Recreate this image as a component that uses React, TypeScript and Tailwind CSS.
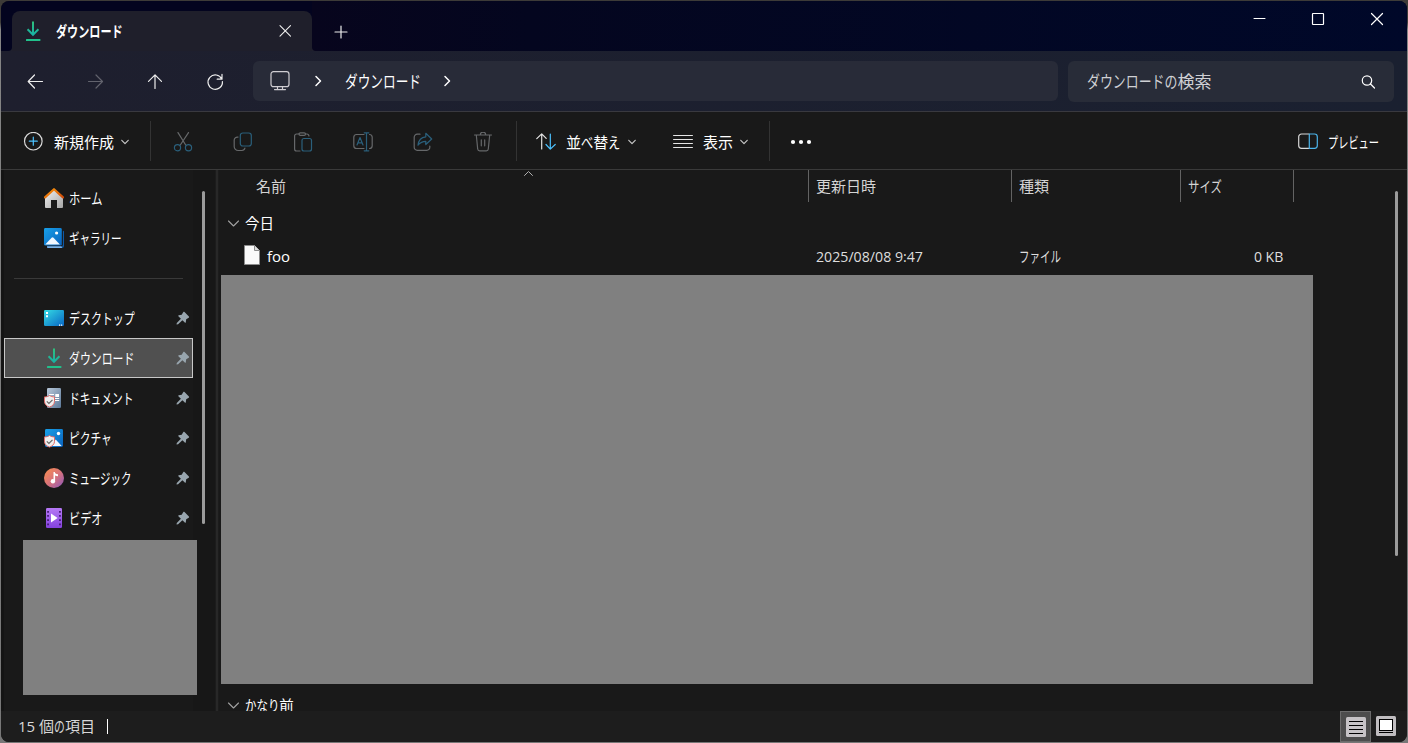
import React, { Fragment, ReactNode } from "react";

const ICON_GRAY = "#66686a";
const ICON_BLUE = "#2a5f7b";

// Kana is set narrower than kanji, so each kana run is squeezed on its own
const Ja = ({ text, k = 0.74 }: { text: string; k?: number }) => {
    const parts = text.split(/([\u3040-\u30ff]+)/).filter(Boolean);
    return <span className="whitespace-pre">
        {
            parts.map((part, ind) => {
                if (!/[\u3040-\u30ff]/.test(part)) return <Fragment key={ind}>{part}</Fragment>;
                return <span key={ind} className="inline-block" style={{ width: `${part.length * k}em` }}>
                    <span className="inline-block origin-left" style={{ transform: `scaleX(${k})` }}>{part}</span>
                </span>
            })
        }
    </span>
};

const Svg = ({ size = 20, color = "#fff", sw = 1.2, className = "", children }: {
    size?: number;
    color?: string;
    sw?: number;
    className?: string;
    children: ReactNode;
}) => {
    return <svg width={size} height={size} viewBox={`0 0 ${size} ${size}`} fill="none" stroke={color} strokeWidth={sw} strokeLinecap="round" strokeLinejoin="round" className={`shrink-0 ${className}`}>{children}</svg>
};

const Chevron = () => {
    return <Svg size={8} color="#c4c4c4"><path d="M.8 2.3 4 5.6 7.2 2.3" /></Svg>
};

const DownloadIcon = () => {
    return <svg width="20" height="20" viewBox="0 0 20 20" fill="none" className="shrink-0">
        <defs>
            <linearGradient id="dl" x1="0" y1="0" x2="0" y2="1">
                <stop offset="0" stopColor="#2fc07c" />
                <stop offset="1" stopColor="#16b0a8" />
            </linearGradient>
        </defs>
        <path d="M9 .6h2v10.7l3.8-3.7 1.3 1.4L10 15.2 3.9 9l1.3-1.4L9 11.3Z" fill="url(#dl)" />
        <rect x="3" y="18" width="14.4" height="2" rx=".6" fill="#21c08b" />
    </svg>
};

const HomeIcon = () => {
    return <svg width="20" height="20" viewBox="0 0 20 20" className="shrink-0">
        <defs>
            <linearGradient id="hm" x1="0" y1="0" x2="1" y2="1">
                <stop offset="0" stopColor="#f1f1f1" />
                <stop offset="1" stopColor="#a6a6a6" />
            </linearGradient>
            <linearGradient id="rf" x1="0" y1="0" x2="1" y2="1">
                <stop offset="0" stopColor="#ff9a0c" />
                <stop offset="1" stopColor="#cf4a0a" />
            </linearGradient>
        </defs>
        <path d="M1 9.5 10 1.5l9 8V19a1 1 0 0 1-1 1h-5v-8H7v8H2a1 1 0 0 1-1-1Z" fill="url(#hm)" />
        <path d="M1 9.4 10 1.2 19 9.4" fill="none" stroke="url(#rf)" strokeWidth="2.2" strokeLinecap="round" strokeLinejoin="round" />
    </svg>
};

const GalleryIcon = () => {
    return <svg width="20" height="20" viewBox="0 0 20 20" className="shrink-0">
        <defs>
            <linearGradient id="gl" x1="0" y1="0" x2="1" y2="1">
                <stop offset="0" stopColor="#18a0e8" />
                <stop offset="1" stopColor="#0a62bd" />
            </linearGradient>
        </defs>
        <path d="M18.9 2.8h.3c.5 0 .8.4.8.9V18a2 2 0 0 1-2 2H4a1 1 0 0 1-1-1v-.2h13.9a2 2 0 0 0 2-2Z" fill="#0d5aa8" />
        <path d="M3 18.3h14.5l.6 1.7H4a1 1 0 0 1-1-1Z" fill="#79b2ea" />
        <rect x="0" y="0" width="17.8" height="17.6" rx="1.4" fill="url(#gl)" />
        <path d="M1.2 16.6 7.6 9.7a1.3 1.3 0 0 1 1.9 0l6.4 6.9Z" fill="#f0f7ff" />
        <circle cx="12.6" cy="5" r="1.6" fill="#fff" />
    </svg>
};

const DesktopIcon = () => {
    return <svg width="20" height="20" viewBox="0 0 20 20" className="shrink-0">
        <defs>
            <linearGradient id="dk" x1="0" y1="0" x2="1" y2="1">
                <stop offset="0" stopColor="#35dbe4" />
                <stop offset="1" stopColor="#0866c4" />
            </linearGradient>
        </defs>
        <rect x="0" y="2" width="20" height="16" rx="1.2" fill="url(#dk)" />
        <path d="M2 4h2v2H2zM2 7.3h2v2H2zM15 16.6h1.2v1.2H15zM17 16.6h1.2v1.2H17z" fill="#fff" />
    </svg>
};

const Shield = () => {
    return <g>
        <path d="M5.5 7.4c1.4 1.1 3 1.5 5 1.5v4.5c0 2.7-1.9 4.6-5 5.7C2.4 18 .5 16.1.5 13.4V8.9c2 0 3.6-.4 5-1.5Z" fill="#efefef" stroke="#e06a67" />
        <path d="M2.8 13.4 4.9 15.4 8.5 11.8" fill="none" stroke="#666" strokeWidth="1.2" />
    </g>
};

const DocumentIcon = () => {
    return <svg width="20" height="20" viewBox="0 0 20 20" className="shrink-0">
        <defs>
            <linearGradient id="dc" x1="0" y1="0" x2="1" y2="1">
                <stop offset="0" stopColor="#b9c9da" />
                <stop offset="1" stopColor="#5b7898" />
            </linearGradient>
        </defs>
        <rect x="3" y="0" width="14" height="20" rx="1.2" fill="url(#dc)" />
        <path d="M5 6.5h5M5 8.8h5M11 10.5h4.2M11 12.5h4.2" stroke="#fff" strokeWidth="1" />
        <rect x="11.3" y="6" width="3.7" height="3" fill="#fff" />
        <Shield />
    </svg>
};

const PictureIcon = () => {
    return <svg width="20" height="20" viewBox="0 0 20 20" className="shrink-0">
        <rect x="1" y="1" width="18" height="18" rx="1.4" fill="url(#gl)" />
        <path d="m6.5 18 5.2-6.4 6 6.4Z" fill="#f0f7ff" />
        <circle cx="14.5" cy="5.5" r="1.7" fill="#fff" />
        <Shield />
    </svg>
};

const MusicIcon = () => {
    return <svg width="20" height="20" viewBox="0 0 20 20" className="shrink-0">
        <defs>
            <linearGradient id="ms" x1=".1" y1=".1" x2=".9" y2=".9">
                <stop offset="0" stopColor="#f58a55" />
                <stop offset=".5" stopColor="#d97379" />
                <stop offset="1" stopColor="#9a5cb0" />
            </linearGradient>
        </defs>
        <circle cx="10" cy="10" r="10" fill="url(#ms)" />
        <circle cx="8.9" cy="13.2" r="2.2" fill="#fff" />
        <path d="M9.5 4h1.3c.2 1.5 1 2 3.2 2.3v2c-1.2 0-2-.2-2.9-.7v5.7H9.5Z" fill="#fff" />
    </svg>
};

const VideoIcon = () => {
    return <svg width="20" height="20" viewBox="0 0 20 20" className="shrink-0">
        <defs>
            <linearGradient id="vd" x1="0" y1="0" x2="0" y2="1">
                <stop offset="0" stopColor="#b678f5" />
                <stop offset="1" stopColor="#8442de" />
            </linearGradient>
        </defs>
        <rect x="2" y="0" width="16" height="20" rx="1.2" fill="url(#vd)" />
        <path d="M3.2 3h1.7v1.7H3.2zM3.2 7h1.7v1.7H3.2zM3.2 11.3h1.7V13H3.2zM3.2 15.5h1.7v1.7H3.2zM15.1 3h1.7v1.7h-1.7zM15.1 7h1.7v1.7h-1.7zM15.1 11.3h1.7V13h-1.7zM15.1 15.5h1.7v1.7h-1.7z" fill="#41186f" />
        <path d="M7 5.6v8.8l6.6-4.4Z" fill="#fff" />
    </svg>
};

const Pin = () => {
    return <svg width="14" height="14" viewBox="0 0 14 14" className="shrink-0">
        <path d="M7.2 1.2c.4-.4.9-.5 1.3-.1l4.4 4.4c.4.4.2.9-.2 1.2l-2.5 1.6-.4 2.9c-.1.6-.6.8-1 .4L6.4 9.2l-4.3 4-1.6.4.3-1.6 4.1-4.3L2.4 5.3c-.4-.4-.2-.9.4-1l2.9-.5Z" fill="#98a5ae" />
    </svg>
};

const places = [
    { icon: <DesktopIcon />, name: "デスクトップ", k: 0.73 },
    { icon: <DownloadIcon />, name: "ダウンロード", k: 0.725, active: true },
    { icon: <DocumentIcon />, name: "ドキュメント", k: 0.715 },
    { icon: <PictureIcon />, name: "ピクチャ", k: 0.715 },
    { icon: <MusicIcon />, name: "ミュージック", k: 0.695 },
    { icon: <VideoIcon />, name: "ビデオ", k: 0.745 },
];

const TitleBar = () => {
    return <div className="flex h-[50px] bg-[#03041f]">
        <div className="flex items-end w-[11px]">
            <div className="w-full h-1 bg-[#1f202d]">
                <div className="h-full rounded-br-sm bg-[#03041f]"></div>
            </div>
        </div>
        <div className="flex w-[300px] h-10 mt-[10px] pl-[11px] items-center rounded-t-lg bg-[#1f1f2b]">
            <DownloadIcon />
            <div className="ml-[13px] w-[220px] text-[15px] font-bold text-white"><Ja text="ダウンロード" k={0.74} /></div>
            <Svg size={16} color="#eee" sw={1.1} className="ml-[1px]"><path d="M3 2.7 13.5 13.2M13.5 2.7 3 13.2" /></Svg>
        </div>
        <div className="flex flex-1 items-end bg-linear-to-r from-[#07051d] via-[#04061f] via-20% to-[#000829]">
            <div className="w-1 h-1 bg-[#1f202d]">
                <div className="h-full rounded-bl-sm bg-[#07051d]"></div>
            </div>
            <Svg size={16} color="#eee" className="ml-[17px] mb-[11px]"><path d="M8 2v12M2 8h12" /></Svg>
            <div className="flex flex-1 h-full pt-[10px] pr-[22px] gap-[43px] items-start justify-end">
                <Svg size={16} sw={1}><path d="M3 7.5h11" /></Svg>
                <Svg size={16}><rect x="2.5" y="2.5" width="11" height="11" rx=".5" /></Svg>
                <Svg size={16}><path d="M2.5 2.5 13.5 13.5M13.5 2.5 2.5 13.5" /></Svg>
            </div>
        </div>
    </div>
};

const NavBar = () => {
    return <div className="flex h-[61px] pt-[10px] border-b border-[#39393f] bg-linear-to-r from-[#1e1f2e] to-[#1a2030]">
        <div className="flex h-10 w-[252px] pl-[24px] gap-10 items-center">
            <Svg color="#eee"><path d="M17.5 10.5h-14M9.5 4 3.2 10.5 9.5 17" /></Svg>
            <Svg color="#62636d"><path d="M3.5 10.5h14M11 4l6.5 6.5L11 17" /></Svg>
            <Svg color="#eee"><path d="M10 17.5V3.8M3.5 10.4 10 3.8l6.5 6.6" /></Svg>
            <Svg color="#eee"><path d="M16.8 8.2a7.2 7.2 0 1 0 .6 2.3M17 3.3v4.9h-4.8" /></Svg>
        </div>
        <div className="flex w-[805px] h-10 pl-[17px] items-center rounded-md bg-[#282b38]">
            <Svg color="#cfcdd2"><rect x="1" y=".7" width="18" height="15" rx="2.5" /><path d="M7.5 16v2.5M12.5 16v2.5M4.5 18.6h11" /></Svg>
            <Svg size={12} sw={1.5} className="ml-[22px]"><path d="M4 1.5 8.5 6 4 10.5" /></Svg>
            <div className="ml-[21px] w-[96px] text-[17px] text-white"><Ja text="ダウンロード" k={0.745} /></div>
            <Svg size={12} sw={1.5}><path d="M4 1.5 8.5 6 4 10.5" /></Svg>
        </div>
        <div className="flex w-[326px] h-[41px] ml-[10px] pl-[19px] pr-[18px] items-center justify-between rounded-md bg-[#282c38]">
            <div className="mb-[2px] text-[17px] text-[#cfd0d4]"><Ja text="ダウンロードの検索" k={0.76} /></div>
            <Svg size={16}><circle cx="7" cy="6.5" r="4.7" /><path d="m10.5 10 4 4" /></Svg>
        </div>
    </div>
};

const CommandBar = () => {
    return <div className="flex h-[58px] items-center border-b border-[#3a3a3a] bg-[#191919] text-[15px] text-white">
        <div className="flex w-[149px] pl-[22px] pt-[3px] items-center">
            <Svg color="#d8d8d8"><circle cx="10.3" cy="9.2" r="8.8" /><path d="M10.3 5.2v8M6.3 9.2h8" stroke="#4cc2ff" /></Svg>
            <div className="ml-[11px] w-[67px]">新規作成</div>
            <Chevron />
        </div>
        <div className="w-px h-10 bg-[#333]"></div>
        <div className="flex w-[365px] pl-[22px] pt-[3px] gap-10 items-center">
            <Svg color={ICON_GRAY}>
                <path d="m5 .6 7.7 12.4M15.5.6 7.3 13" />
                <circle cx="4.5" cy="15.7" r="3.1" stroke={ICON_BLUE} />
                <circle cx="15.5" cy="15.7" r="3.1" stroke={ICON_BLUE} />
            </Svg>
            <Svg color={ICON_GRAY}>
                <path d="M5 5.2A3 3 0 0 0 1.2 8v6.5a4 4 0 0 0 4 4H9a3 3 0 0 0 2.9-2.3" />
                <rect x="7.3" y="1" width="11" height="13" rx="2.5" stroke={ICON_BLUE} />
            </Svg>
            <Svg color={ICON_GRAY}>
                <path d="M6 2H3.5a1.9 1.9 0 0 0-1.9 1.9V17a2 2 0 0 0 2 2H7M12.5 2H14a1.9 1.9 0 0 1 1.9 1.9" />
                <rect x="6" y=".8" width="6.5" height="2.6" rx="1.3" />
                <rect x="9" y="6.5" width="9.5" height="12.5" rx="2" stroke={ICON_BLUE} />
            </Svg>
            <Svg color={ICON_GRAY}>
                <path d="M11 2.5H3.5A2.8 2.8 0 0 0 .8 5.3v8.4a2.8 2.8 0 0 0 2.7 2.8H11M16.5 2.5a2.8 2.8 0 0 1 2.7 2.8v8.4a2.8 2.8 0 0 1-2.7 2.8" />
                <path d="M13.5.8v18M11.2.8h4.6M11.2 18.8h4.6M4 13l3-7.5L10 13M5 10.8h4" stroke={ICON_BLUE} />
            </Svg>
            <Svg color={ICON_GRAY}>
                <path d="M7 2.2H4.2a3 3 0 0 0-3 3v10.1a3 3 0 0 0 3 3h9.6a3 3 0 0 0 3-3V14" />
                <path d="M12.8 1.3 18.7 7l-5.9 5.5V9.3c-3.2 0-5.5 1-7.8 3.9.5-4.6 3-8 7.8-8.4Z" stroke={ICON_BLUE} />
            </Svg>
            <Svg color={ICON_GRAY}>
                <path d="M1.5 3h17M7.3 2.9a2.7 2.7 0 0 1 5.4 0M3.3 3l1.4 14a2 2 0 0 0 2 1.8h6.6a2 2 0 0 0 2-1.8l1.4-14M8.3 7.8v6M11.7 7.8v6" />
            </Svg>
        </div>
        <div className="w-px h-10 bg-[#333]"></div>
        <div className="flex w-[252px] pl-[19px] pt-[3px] items-center">
            <Svg color="#e4e4e4">
                <path d="M5.7 17V2M.8 6.7l4.9-4.9 4.5 4.5" />
                <path d="M14.3 2v15M10 12.5l4.3 4.6 4.9-4.6" stroke="#4cc2ff" />
            </Svg>
            <div className="ml-[10px] w-[62px]"><Ja text="並べ替え" k={0.82} /></div>
            <Chevron />
            <Svg color="#e4e4e4" className="ml-[37px]"><path d="M.6 3.5h18.8M.6 7.5h18.8M.6 11.5h18.8M.6 15.5h18.8" /></Svg>
            <div className="ml-[10px] w-[37px]">表示</div>
            <Chevron />
        </div>
        <div className="w-px h-10 bg-[#333]"></div>
        <div className="flex flex-1 ml-[20px] pt-[2px]">
            <svg width="22" height="6" viewBox="0 0 22 6" fill="#fff">
                <circle cx="3" cy="3" r="2.1" />
                <circle cx="11" cy="3" r="2.1" />
                <circle cx="19" cy="3" r="2.1" />
            </svg>
        </div>
        <div className="flex pt-[3px] items-center">
            <Svg color="#d8d8d8">
                <path d="M11 2H3.5A2.8 2.8 0 0 0 .7 4.8v8.8a2.8 2.8 0 0 0 2.8 2.8H11" />
                <path d="M11.3 2h5.2a2.8 2.8 0 0 1 2.8 2.8v8.8a2.8 2.8 0 0 1-2.8 2.8h-5.2Z" stroke="#4cb4ea" />
            </Svg>
            <div className="w-[79px] ml-[10px]"><Ja text="プレビュー" k={0.68} /></div>
        </div>
    </div>
};

const Sidebar = () => {
    return <div className="flex w-[214px] border-l-[3px] border-[#141414] bg-[#171717]">
        <div className="w-[189px] pt-2 bg-[#191919] text-[15px] text-white">
            <div className="flex h-10 pl-10 gap-[5px] items-center"><HomeIcon /><Ja text="ホーム" k={0.75} /></div>
            <div className="flex h-10 pl-10 gap-[5px] items-center"><GalleryIcon /><Ja text="ギャラリー" k={0.7} /></div>
            <div className="h-10 pt-5 pl-[10px] pr-[10px]"><div className="h-px bg-[#393939]"></div></div>
            {
                places.map((p, ind) => {
                    return <div key={ind} className={`flex h-10 gap-[5px] items-center border pl-[39px] pr-[2px] ${p.active ? "border-[#c8c8c8] bg-[#505050]" : "border-transparent"}`}>
                        {p.icon}
                        <div className="flex-1"><Ja text={p.name} k={p.k} /></div>
                        <Pin />
                    </div>
                })
            }
            <div className="w-[174px] h-[155px] mt-[2px] ml-[19px] bg-[#808080]"></div>
        </div>
        <div className="w-[3px] h-[333px] mt-[21px] ml-[9px] rounded-full bg-[#9b9b9b]"></div>
    </div>
};

const GroupRow = ({ text, k }: { text: string; k?: number }) => {
    return <div className="flex h-[30px] pl-[8px] items-center">
        <Svg size={12} color="#a0a0a0" sw={1.1}><path d="M1.5 4 6.5 9l5-5" /></Svg>
        <div className="ml-[6px] text-[14.5px] text-white"><Ja text={text} k={k} /></div>
    </div>
};

const FileList = () => {
    return <div className="flex flex-1 h-full overflow-hidden bg-[#191919] text-[15px] text-[#dedede]">
        <div className="w-[1176px] shrink-0">
            <div className="flex relative h-8 items-center text-[#d4d4d4]">
                <Svg size={10} color="#b0b0b0" sw={1} className="absolute left-[305px] -top-[2px]"><path d="M.5 7.5l4-4 4 4" /></Svg>
                <div className="w-[590px] h-8 pl-[37px] border-r border-[#636363] leading-8">名前</div>
                <div className="w-[203px] h-8 pl-[7px] border-r border-[#636363] leading-8">更新日時</div>
                <div className="w-[169px] h-8 pl-[7px] border-r border-[#636363] leading-8">種類</div>
                <div className="w-[113px] h-8 pl-[7px] border-r border-[#636363] leading-8"><Ja text="サイズ" k={0.76} /></div>
            </div>
            <div className="h-[6px]"></div>
            <GroupRow text="今日" />
            <div className="flex h-9 items-center">
                <div className="flex w-[597px] pl-[25px] items-center text-white">
                    <svg width="16" height="20" viewBox="0 0 16 20" className="mb-[2px]">
                        <path d="M.5.5h10l5 5v14H.5Z" fill="#fafafa" stroke="#8c8c8c" />
                        <path d="M10.5.5v5h5" fill="#ddd" stroke="#8c8c8c" />
                    </svg>
                    <div className="ml-[7px] font-['Open_Sans']">foo</div>
                </div>
                <div className="w-[203px]"><span className="inline-block origin-left scale-x-[.945] font-['Open_Sans'] whitespace-nowrap">2025/08/08 9:47</span></div>
                <div className="w-[169px]"><Ja text="ファイル" k={0.7} /></div>
                <div className="w-[95px] text-right"><span className="inline-block origin-right scale-x-[.94] font-['Open_Sans']">0 KB</span></div>
            </div>
            <div className="w-[1092px] h-[409px] mt-[1px] ml-[2px] bg-[#808080]"></div>
            <div className="h-[6px]"></div>
            <GroupRow text="かなり前" k={0.79} />
        </div>
        <div className="w-[3px] h-[365px] mt-[21px] rounded-full bg-[#9b9b9b]"></div>
    </div>
};

const StatusBar = () => {
    return <div className="flex h-[31px] pl-[17px] pr-[7px] items-center bg-[#1d1d1d] text-[15px] text-[#d8d8d8]">
        <div className="w-[89px] whitespace-pre"><span className="font-['Open_Sans']">15 </span><Ja text="個の項目" k={0.72} /></div>
        <div className="w-px h-[15px] bg-white"></div>
        <div className="flex-1"></div>
        <div className="flex w-[31px] h-[31px] items-center justify-center border border-[#6b6b6b] bg-[#4d4d4d]">
            <svg width="20" height="20" viewBox="0 0 20 20">
                <rect width="20" height="20" rx="1.5" fill="#c6c3c6" />
                <path d="M3 4.5h14M3 8.5h14M3 12.5h14M3 16.5h14" stroke="#000" />
            </svg>
        </div>
        <svg width="20" height="20" viewBox="0 0 20 20" className="ml-[5px] mr-1 mb-[1px]">
            <rect width="20" height="20" rx="1.5" fill="#c0bdc0" />
            <rect x="3.5" y="3.5" width="13" height="11" fill="#fff" stroke="#000" />
            <path d="M3 16.5h14" stroke="#000" />
        </svg>
    </div>
};

const App = () => {
    return <div className="w-[1408px] h-[743px] overflow-hidden bg-linear-to-b from-[#3d3b38] from-3% via-[#858585] via-4% to-[#777] p-px font-['Noto_Sans_CJK_JP',sans-serif]">
        <div className="flex flex-col w-[1406px] h-[741px] overflow-hidden rounded-lg bg-[#191919]">
            <TitleBar />
            <NavBar />
            <CommandBar />
            <div className="flex h-[541px] overflow-hidden">
                <Sidebar />
                <div className="w-1 shrink-0 border-x border-[#1c1c1c] bg-[#282828]"></div>
                <FileList />
            </div>
            <StatusBar />
        </div>
    </div>
};

export default App;
